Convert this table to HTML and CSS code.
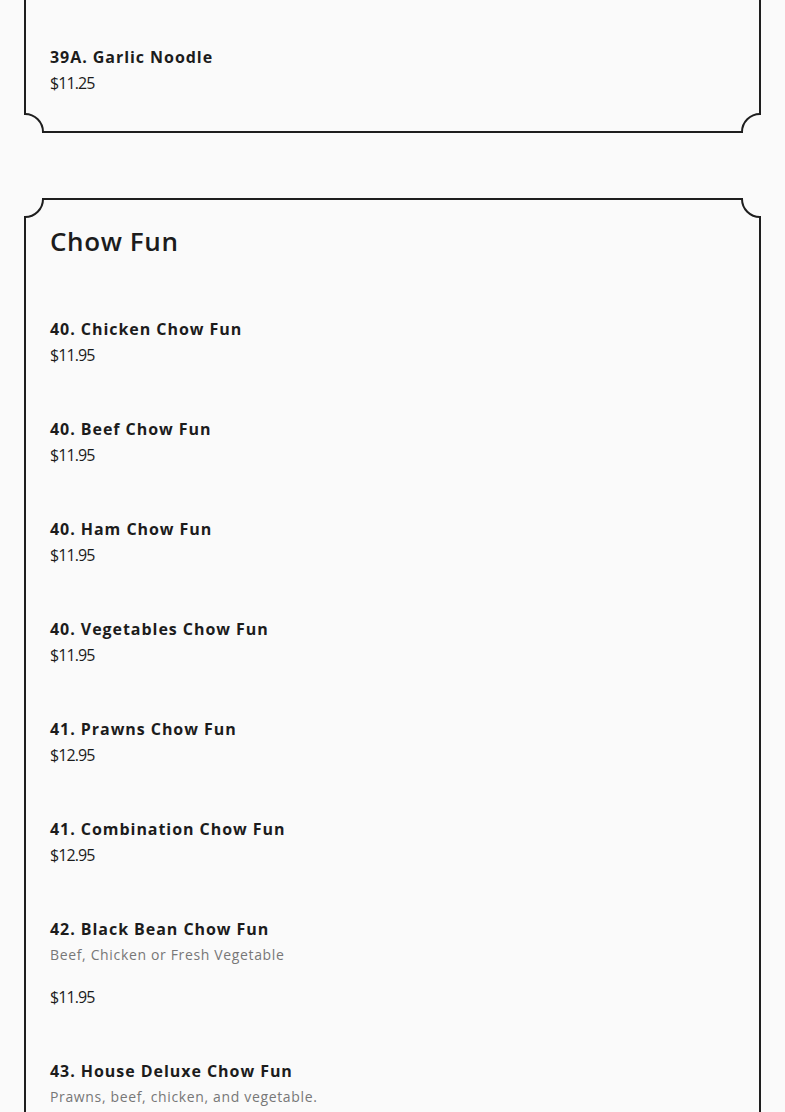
FILE: index.html
```html
<!DOCTYPE html>
<html lang="en">
<head>
<meta charset="utf-8">
<title>Menu</title>
<link rel="stylesheet" href="styles.css">
</head>
<body>
<main class="page">
  <section class="card card--first">
    <svg class="corner corner--tl" width="22" height="22" viewBox="0 0 22 22"><circle cx="1" cy="1" r="18"/></svg>
    <svg class="corner corner--tr" width="22" height="22" viewBox="0 0 22 22"><circle cx="21" cy="1" r="18"/></svg>
    <svg class="corner corner--bl" width="22" height="22" viewBox="0 0 22 22"><circle cx="1" cy="21" r="18"/></svg>
    <svg class="corner corner--br" width="22" height="22" viewBox="0 0 22 22"><circle cx="21" cy="21" r="18"/></svg>
    <div class="item">
      <h3 class="item-name">39A. Garlic Noodle</h3>
      <p class="item-price">$11.25</p>
    </div>
  </section>

  <section class="card">
    <svg class="corner corner--tl" width="22" height="22" viewBox="0 0 22 22"><circle cx="1" cy="1" r="18"/></svg>
    <svg class="corner corner--tr" width="22" height="22" viewBox="0 0 22 22"><circle cx="21" cy="1" r="18"/></svg>
    <svg class="corner corner--bl" width="22" height="22" viewBox="0 0 22 22"><circle cx="1" cy="21" r="18"/></svg>
    <svg class="corner corner--br" width="22" height="22" viewBox="0 0 22 22"><circle cx="21" cy="21" r="18"/></svg>
    <h2 class="card-title">Chow Fun</h2>
    <div class="item">
      <h3 class="item-name">40. Chicken Chow Fun</h3>
      <p class="item-price">$11.95</p>
    </div>
    <div class="item">
      <h3 class="item-name">40. Beef Chow Fun</h3>
      <p class="item-price">$11.95</p>
    </div>
    <div class="item">
      <h3 class="item-name">40. Ham Chow Fun</h3>
      <p class="item-price">$11.95</p>
    </div>
    <div class="item">
      <h3 class="item-name">40. Vegetables Chow Fun</h3>
      <p class="item-price">$11.95</p>
    </div>
    <div class="item">
      <h3 class="item-name">41. Prawns Chow Fun</h3>
      <p class="item-price">$12.95</p>
    </div>
    <div class="item">
      <h3 class="item-name">41. Combination Chow Fun</h3>
      <p class="item-price">$12.95</p>
    </div>
    <div class="item">
      <h3 class="item-name">42. Black Bean Chow Fun</h3>
      <p class="item-desc">Beef, Chicken or Fresh Vegetable</p>
      <p class="item-price">$11.95</p>
    </div>
    <div class="item">
      <h3 class="item-name">43. House Deluxe Chow Fun</h3>
      <p class="item-desc">Prawns, beef, chicken, and vegetable.</p>
      <p class="item-price">$12.95</p>
    </div>
  </section>
</main>
</body>
</html>
```

FILE: styles.css
```css
* { box-sizing: border-box; }

html, body {
  margin: 0;
  padding: 0;
  background: #fafafa;
}

body {
  font-family: "Open Sans", "Liberation Sans", sans-serif;
  color: #1c1c1c;
  overflow: hidden;
}

.page {
  padding: 0 24px;
  display: flex;
  flex-direction: column;
  gap: 65px;
}

.card {
  position: relative;
  border: 2px solid #1e1e1e;
  padding: 24px 24px 35px;
}

.card--first {
  margin-top: -60px;
  padding-top: 54px;
}

.corner {
  position: absolute;
  display: block;
  overflow: hidden;
}
.corner circle {
  fill: #fafafa;
  stroke: #1e1e1e;
  stroke-width: 2;
}
.corner--tl { top: -2px; left: -2px; }
.corner--tr { top: -2px; right: -2px; }
.corner--bl { bottom: -2px; left: -2px; }
.corner--br { bottom: -2px; right: -2px; }

.card-title {
  margin: 0 0 10px;
  font-size: 26px;
  line-height: 34px;
  font-weight: 600;
  letter-spacing: 0.6px;
}

.item {
  padding-top: 48px;
}

.item-name {
  margin: 0;
  font-size: 16px;
  line-height: 26px;
  font-weight: 700;
  letter-spacing: 0.95px;
}

.item-desc {
  margin: 0 0 16px;
  font-size: 14px;
  line-height: 26px;
  color: #777777;
  letter-spacing: 0.65px;
}

.item-price {
  margin: 0;
  font-size: 16px;
  line-height: 26px;
  font-weight: 400;
  letter-spacing: -0.9px;
}
```
